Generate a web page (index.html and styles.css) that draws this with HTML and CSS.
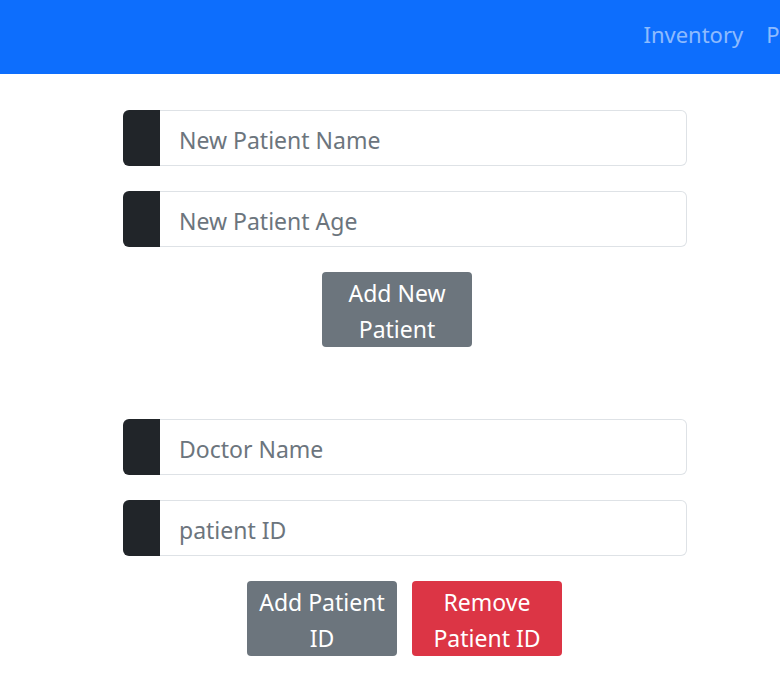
FILE: index.html
```html
<!DOCTYPE html>
<html lang="en">
<head>
    <meta charset="UTF-8">
    <meta name="viewport" content="width=device-width, initial-scale=1.0">
    <title>Patients</title>
    <link rel="stylesheet" href="styles.css">
</head>
<body>
    <nav class="navbar">
        <ul class="nav-links">
            <li><a href="#">Inventory</a></li>
            <li><a href="#">Patients</a></li>
        </ul>
    </nav>

    <div class="container">
        <form class="patient-form">
            <div class="input-group">
                <span class="input-prefix"></span>
                <input type="text" placeholder="New Patient Name">
            </div>
            <div class="input-group">
                <span class="input-prefix"></span>
                <input type="text" placeholder="New Patient Age">
            </div>
            <div class="buttons shift">
                <button type="button" class="btn btn-secondary">Add New Patient</button>
            </div>
        </form>

        <form class="patient-form second">
            <div class="input-group">
                <span class="input-prefix"></span>
                <input type="text" placeholder="Doctor Name">
            </div>
            <div class="input-group">
                <span class="input-prefix"></span>
                <input type="text" placeholder="patient ID">
            </div>
            <div class="buttons">
                <button type="button" class="btn btn-secondary">Add Patient ID</button>
                <button type="button" class="btn btn-danger">Remove Patient ID</button>
            </div>
        </form>
    </div>
</body>
</html>
```

FILE: styles.css
```css
* {
    box-sizing: border-box;
}

body {
    font-family: "Noto Sans", "Open Sans", sans-serif;
    margin: 0;
    padding: 0;
    background-color: #ffffff;
    overflow-x: hidden;
}

.navbar {
    background-color: #0d6efd;
    height: 74px;
    padding-bottom: 6px;
    display: flex;
    justify-content: flex-end;
    align-items: center;
    overflow: hidden;
}

.nav-links {
    list-style: none;
    margin: 0;
    padding: 0;
    display: flex;
    gap: 23px;
    margin-right: -70px;
    white-space: nowrap;
}

.nav-links a {
    color: rgba(255, 255, 255, 0.55);
    text-decoration: none;
    font-size: 22px;
}

.container {
    width: 564px;
    margin-left: 123px;
    padding-top: 36px;
}

.patient-form {
    display: flex;
    flex-direction: column;
    gap: 25px;
}

.patient-form.second {
    margin-top: 72px;
}

.input-group {
    display: flex;
    height: 56px;
}

.input-prefix {
    width: 37px;
    background-color: #212529;
    border-radius: 6px 0 0 6px;
}

.input-group input {
    flex: 1;
    border: 1px solid #dee2e6;
    border-left: none;
    border-radius: 0 6px 6px 0;
    padding: 4px 19px 0;
    font-family: inherit;
    font-size: 23px;
    color: #212529;
    outline: none;
}

.input-group input::placeholder {
    color: #6c757d;
}

.buttons {
    display: flex;
    justify-content: center;
    gap: 15px;
    margin-right: 1px;
}

.buttons.shift {
    margin-right: 16px;
}

.btn {
    width: 150px;
    height: 75px;
    padding: 2px 8px 0;
    border: none;
    border-radius: 4px;
    color: #ffffff;
    font-family: inherit;
    font-size: 23px;
    line-height: 36px;
    text-align: center;
    cursor: pointer;
}

.btn-secondary {
    background-color: #6c757d;
}

.btn-danger {
    background-color: #dc3545;
}
```
